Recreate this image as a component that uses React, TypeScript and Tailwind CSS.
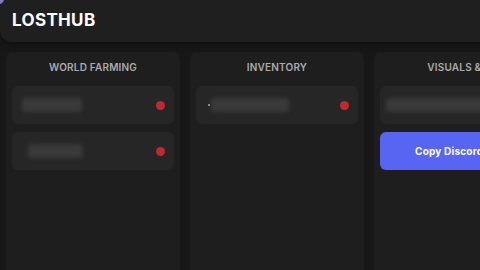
const font = { fontFamily: 'Inter, "Noto Sans", sans-serif' }

function Blur({ w, ml = 0, dot = false }: { w: number; ml?: number; dot?: boolean }) {
  return (
    <div className="relative flex items-center" style={{ marginLeft: ml }}>
      {dot && <span className="absolute -left-[3px] h-[2px] w-[2px] rounded-full bg-white/70" />}
      <div className="h-[14px] rounded-sm bg-[#3a3a3a] blur-[2px]" style={{ width: w }} />
    </div>
  )
}

function Card({ children }: { children: React.ReactNode }) {
  return (
    <div className="flex h-[38px] items-center justify-between rounded-md bg-[#262626] pl-[10px] pr-[9px]">
      {children}
      <span className="h-[9px] w-[9px] rounded-full bg-[#c2282f]" />
    </div>
  )
}

function Column({ title, children }: { title: string; children: React.ReactNode }) {
  return (
    <div className="flex w-[174px] shrink-0 flex-col rounded-t-lg bg-[#1e1e1e] px-[6px] pt-[6px]">
      <div className="mb-[10px] flex h-[18px] items-center justify-center whitespace-nowrap text-[10px] font-semibold tracking-[0.02em] text-[#ababab]">
        {title}
      </div>
      <div className="flex flex-col gap-2">{children}</div>
    </div>
  )
}

export default function App() {
  return (
    <div className="relative flex h-[270px] w-[480px] flex-col overflow-hidden bg-[#171717]" style={font}>
      <div className="absolute -left-[6px] -top-[6px] h-[10px] w-[10px] rounded-full bg-[#7c7cc4]" />
      <header className="flex h-[42px] w-[520px] shrink-0 items-center rounded-b-xl bg-[#1f1f1f] px-3 shadow-[0_2px_6px_rgba(0,0,0,0.35)]">
        <h1 className="text-[17px] font-bold tracking-[0.02em] text-white">LOSTHUB</h1>
      </header>

      <main className="flex flex-1 gap-[10px] px-[6px] pt-[10px]">
        <Column title="WORLD FARMING">
          <Card>
            <Blur w={60} />
          </Card>
          <Card>
            <Blur w={55} ml={6} />
          </Card>
        </Column>

        <Column title="INVENTORY">
          <Card>
            <Blur w={78} ml={5} dot />
          </Card>
        </Column>

        <Column title="VISUALS & UI">
          <Card>
            <Blur w={100} ml={-4} />
          </Card>
          <button className="flex h-[38px] items-center justify-center rounded-md bg-[#5865f2] text-[10px] font-bold tracking-[0.02em] text-white">
            Copy Discord Link
          </button>
        </Column>
      </main>
    </div>
  )
}
